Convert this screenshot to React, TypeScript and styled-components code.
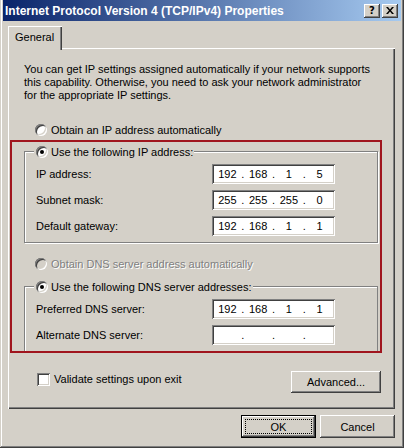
import React from 'react';
import styled, { createGlobalStyle } from 'styled-components';

const face = '#d4d0c8';
const shadow = '#808080';
const darkShadow = '#404040';

const GlobalStyle = createGlobalStyle`
  html, body {
    margin: 0;
    padding: 0;
    background: ${face};
  }
  body {
    font-family: 'Liberation Sans', Arial, sans-serif;
    font-size: 11px;
    color: #000;
  }
  * {
    box-sizing: border-box;
  }
`;

interface IpFieldProps {
	octets: string[];
}

const IpField: React.FC<IpFieldProps> = ({ octets }) => (
	<Field>
		{octets.map((octet, i) => (
			<React.Fragment key={i}>
				{i > 0 && <Dot>.</Dot>}
				<Octet>{octet}</Octet>
			</React.Fragment>
		))}
	</Field>
);

const CloseGlyph = () => (
	<svg width="8" height="7" viewBox="0 0 8 7">
		<path d="M0 0h2l2 2.5L6 0h2L5 3.5 8 7H6L4 4.5 2 7H0l3-3.5z" fill="#000" />
	</svg>
);

const App: React.FC = () => {
	return (
		<Window>
			<GlobalStyle />
			<TitleBar>
				<Title>Internet Protocol Version 4 (TCP/IPv4) Properties</Title>
				<CaptionButtons>
					<CaptionButton>?</CaptionButton>
					<CaptionButton>
						<CloseGlyph />
					</CaptionButton>
				</CaptionButtons>
			</TitleBar>
			<TabStrip>
				<Tab>General</Tab>
			</TabStrip>
			<Panel>
				<Description>
					You can get IP settings assigned automatically if your network supports
					<br />
					this capability. Otherwise, you need to ask your network administrator
					<br />
					for the appropriate IP settings.
				</Description>
				<OptionRow indent={25} top={21}>
					<Radio />
					<span>Obtain an IP address automatically</span>
				</OptionRow>
				<Highlight>
					<GroupBox>
						<Legend>
							<Radio checked />
							<span>Use the following IP address:</span>
						</Legend>
						<FieldRow>
							<FieldLabel>IP address:</FieldLabel>
							<IpField octets={['192', '168', '1', '5']} />
						</FieldRow>
						<FieldRow>
							<FieldLabel>Subnet mask:</FieldLabel>
							<IpField octets={['255', '255', '255', '0']} />
						</FieldRow>
						<FieldRow>
							<FieldLabel>Default gateway:</FieldLabel>
							<IpField octets={['192', '168', '1', '1']} />
						</FieldRow>
					</GroupBox>
					<OptionRow indent={11} top={14} disabled>
						<Radio disabled />
						<span>Obtain DNS server address automatically</span>
					</OptionRow>
					<GroupBox open>
						<Legend>
							<Radio checked />
							<span>Use the following DNS server addresses:</span>
						</Legend>
						<FieldRow>
							<FieldLabel>Preferred DNS server:</FieldLabel>
							<IpField octets={['192', '168', '1', '1']} />
						</FieldRow>
						<FieldRow>
							<FieldLabel>Alternate DNS server:</FieldLabel>
							<IpField octets={['', '', '', '']} />
						</FieldRow>
					</GroupBox>
				</Highlight>
				<PanelFooter>
					<CheckLabel>
						<Checkbox />
						<span>Validate settings upon exit</span>
					</CheckLabel>
					<Button width={90} height={22}>
						Advanced...
					</Button>
				</PanelFooter>
			</Panel>
			<DialogButtons>
				<Button width={75} height={23} isDefault>
					<FocusRing>OK</FocusRing>
				</Button>
				<Button width={75} height={23}>
					Cancel
				</Button>
			</DialogButtons>
		</Window>
	);
};

export default App;

const raised = `
  background: ${face};
  box-shadow: inset -1px -1px ${darkShadow}, inset 1px 1px #fff,
    inset -2px -2px ${shadow}, inset 2px 2px ${face};
`;

const sunken = `
  box-shadow: inset 1px 1px ${shadow}, inset -1px -1px #fff,
    inset 2px 2px ${darkShadow}, inset -2px -2px ${face};
`;

const Window = styled.div`
	width: 404px;
	height: 448px;
	padding: 0 3px 3px 3px;
	display: flex;
	flex-direction: column;
	background: ${face};
	box-shadow: inset -1px -1px ${darkShadow}, inset 1px 0 ${face},
		inset -2px -2px ${shadow}, inset 2px 0 #fff;
`;

const TitleBar = styled.div`
	height: 21px;
	display: flex;
	align-items: center;
	padding: 0 3px 0 2px;
	background: linear-gradient(to right, #0a246a, #a6caf0);
	color: #fff;
	font-weight: bold;
	font-size: 12px;
`;

const Title = styled.span`
	flex: 1;
	white-space: nowrap;
`;

const CaptionButtons = styled.div`
	display: flex;
	gap: 2px;
`;

const CaptionButton = styled.div`
	width: 16px;
	height: 14px;
	display: flex;
	align-items: center;
	justify-content: center;
	color: #000;
	font-family: 'DejaVu Sans', sans-serif;
	font-size: 10px;
	font-weight: bold;
	${raised}
`;

const TabStrip = styled.div`
	display: flex;
	margin: 5px 0 0 5px;
`;

const Tab = styled.div`
	position: relative;
	z-index: 1;
	width: 54px;
	height: 24px;
	margin-bottom: -2px;
	padding: 0 0 2px 7px;
	display: flex;
	align-items: center;
	background: ${face};
	box-shadow: inset 1px 1px #fff, inset -1px 0 ${darkShadow},
		inset -2px 0 ${shadow};
`;

const Panel = styled.div`
	height: 361px;
	margin: 0 6px 0 5px;
	padding: 2px;
	display: flex;
	flex-direction: column;
	box-shadow: inset 1px 1px #fff, inset -1px -1px ${darkShadow},
		inset -2px -2px ${shadow};
`;

const Description = styled.p`
	margin: 13px 0 0 14px;
	line-height: 13px;
	white-space: nowrap;
`;

const OptionRow = styled.div<{ indent: number; top: number; disabled?: boolean }>`
	height: 14px;
	margin: ${(p) => p.top}px 0 0 ${(p) => p.indent}px;
	display: flex;
	align-items: center;
	gap: 4px;
	color: ${(p) => (p.disabled ? shadow : '#000')};
	text-shadow: ${(p) => (p.disabled ? '1px 1px #fff' : 'none')};
`;

const Radio = styled.span<{ checked?: boolean; disabled?: boolean }>`
	width: 12px;
	height: 12px;
	flex: none;
	border-radius: 50%;
	display: flex;
	align-items: center;
	justify-content: center;
	background: ${(p) => (p.disabled ? face : '#fff')};
	box-shadow: inset 1px 1px ${shadow}, inset -1px -1px #fff,
		inset 2px 2px ${darkShadow}, inset -2px -2px ${face};

	&::after {
		content: '';
		width: 4px;
		height: 4px;
		border-radius: 50%;
		background: ${(p) => (p.checked ? '#000' : 'transparent')};
	}
`;

const Highlight = styled.div`
	width: 372px;
	margin-top: 3px;
	padding: 9px 0 0 12px;
	border: 2px solid #a0151e;
`;

const GroupBox = styled.div<{ open?: boolean }>`
	width: 354px;
	margin-top: ${(p) => (p.open ? 15 : 0)}px;
	padding: 0 10px 6px 11px;
	display: flex;
	flex-direction: column;
	gap: 6px;
	border: 1px solid ${shadow};
	border-bottom: ${(p) => (p.open ? 'none' : `1px solid ${shadow}`)};
	box-shadow: ${(p) =>
		p.open
			? `inset 1px 1px #fff`
			: `inset 1px 1px #fff, 1px 1px #fff`};
`;

const Legend = styled.div`
	align-self: flex-start;
	height: 14px;
	margin: -7px 0 -1px -2px;
	padding: 0 1px 0 2px;
	display: flex;
	align-items: center;
	gap: 3px;
	background: ${face};
`;

const FieldRow = styled.div`
	height: 20px;
	display: flex;
	align-items: center;
`;

const FieldLabel = styled.span`
	width: 176px;
	flex: none;
`;

const Field = styled.div`
	width: 123px;
	height: 20px;
	padding: 2px;
	display: flex;
	align-items: center;
	background: #fff;
	${sunken}
`;

const Octet = styled.span`
	flex: 1;
	text-align: center;
`;

const Dot = styled.span`
	width: 4px;
	text-align: center;
`;

const PanelFooter = styled.div`
	height: 22px;
	margin-top: 18px;
	padding: 0 12px 0 27px;
	display: flex;
	align-items: center;
	justify-content: space-between;
`;

const CheckLabel = styled.div`
	align-self: flex-start;
	height: 14px;
	margin-top: 1px;
	display: flex;
	align-items: center;
	gap: 4px;
`;

const Checkbox = styled.span`
	width: 13px;
	height: 13px;
	background: #fff;
	${sunken}
`;

const Button = styled.div<{ width: number; height: number; isDefault?: boolean }>`
	width: ${(p) => p.width}px;
	height: ${(p) => p.height}px;
	display: flex;
	align-items: center;
	justify-content: center;
	${raised}
	border: ${(p) => (p.isDefault ? '1px solid #000' : 'none')};
`;

const FocusRing = styled.span`
	align-self: stretch;
	flex: 1;
	margin: 3px;
	display: flex;
	align-items: center;
	justify-content: center;
	border: 1px dotted #000;
`;

const DialogButtons = styled.div`
	margin-top: 6px;
	padding-right: 6px;
	display: flex;
	justify-content: flex-end;
	gap: 4px;
`;
